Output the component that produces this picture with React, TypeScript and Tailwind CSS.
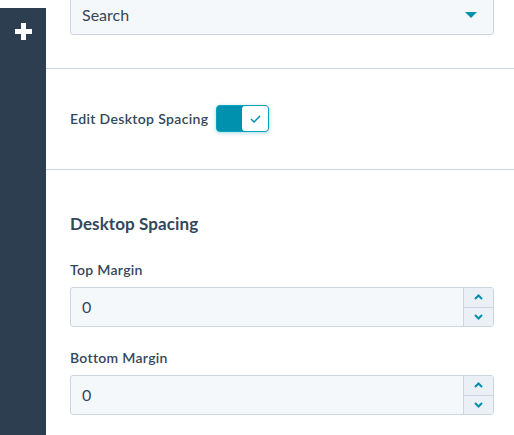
import { ReactNode } from "react"

function Stepper({ value }: { value: string }) {
  return (
    <div className="flex h-10 w-full rounded-[3px] border border-[#cbd6e2] bg-[#f5f8fa]">
      <div className="flex flex-1 items-center pl-[11px] text-base text-[#33475b]">{value}</div>
      <div className="flex w-[30px] flex-col border-l border-[#cbd6e2] bg-[#eaf0f6]">
        <button className="flex flex-1 items-center justify-center border-b border-[#cbd6e2]">
          <svg width="9" height="6" viewBox="0 0 9 6">
            <path d="M1 5 L4.5 1.5 L8 5" fill="none" stroke="#0091ae" strokeWidth="2" />
          </svg>
        </button>
        <button className="flex flex-1 items-center justify-center">
          <svg width="9" height="6" viewBox="0 0 9 6">
            <path d="M1 1 L4.5 4.5 L8 1" fill="none" stroke="#0091ae" strokeWidth="2" />
          </svg>
        </button>
      </div>
    </div>
  )
}

function Field({ label, children }: { label: string; children: ReactNode }) {
  return (
    <div className="flex flex-col">
      <label className="mb-[7px] text-sm leading-5 font-semibold tracking-[0.3px] text-[#33475b]">{label}</label>
      {children}
    </div>
  )
}

export default function App() {
  return (
    <div className="flex h-screen overflow-hidden bg-white font-['Lato',sans-serif]">
      {/* sidebar */}
      <div className="mt-2 flex w-[46px] shrink-0 justify-center bg-[#2d3e50] pt-[15px]">
        <svg width="17" height="17" viewBox="0 0 17 17">
          <rect x="6" y="0" width="5" height="17" fill="#fff" />
          <rect x="0" y="6" width="17" height="5" fill="#fff" />
        </svg>
      </div>

      <div className="flex flex-1 flex-col">
        <div className="border-b border-[#cbd6e2] pr-5 pb-[33px] pl-6">
          <div className="-mt-[5px] flex h-10 items-center justify-between rounded-[3px] border border-[#cbd6e2] bg-[#f5f8fa] pr-[16px] pl-[11px]">
            <span className="text-base text-[#33475b]">Search</span>
            <svg width="12" height="6" viewBox="0 0 12 6">
              <path d="M0 0 H12 L6 6 Z" fill="#0091ae" />
            </svg>
          </div>
        </div>

        <div className="flex items-center gap-2 border-b border-[#cbd6e2] pt-9 pr-5 pb-[37px] pl-6">
          <span className="text-sm leading-5 font-semibold tracking-[0.35px] text-[#33475b]">Edit Desktop Spacing</span>
          <div className="flex h-[27px] w-[53px] rounded-[4px] border border-[#00a4bd] bg-[#0091ae] shadow-[0_1px_4px_rgba(0,145,174,0.35)]">
            <div className="flex-1" />
            <div className="flex w-[26px] items-center justify-center rounded-[3px] bg-white">
              <svg width="11" height="8" viewBox="0 0 11 8">
                <path d="M1 4 L4 7 L10 1" fill="none" stroke="#0091ae" strokeWidth="1.5" />
              </svg>
            </div>
          </div>
        </div>

        <div className="flex flex-col pt-[42px] pr-5 pl-6">
          <h2 className="text-[17px] leading-6 font-bold tracking-[0.1px] text-[#33475b]">Desktop Spacing</h2>
          <div className="mt-6 flex flex-col gap-[21px]">
            <Field label="Top Margin">
              <Stepper value="0" />
            </Field>
            <Field label="Bottom Margin">
              <Stepper value="0" />
            </Field>
          </div>
        </div>
      </div>
    </div>
  )
}
